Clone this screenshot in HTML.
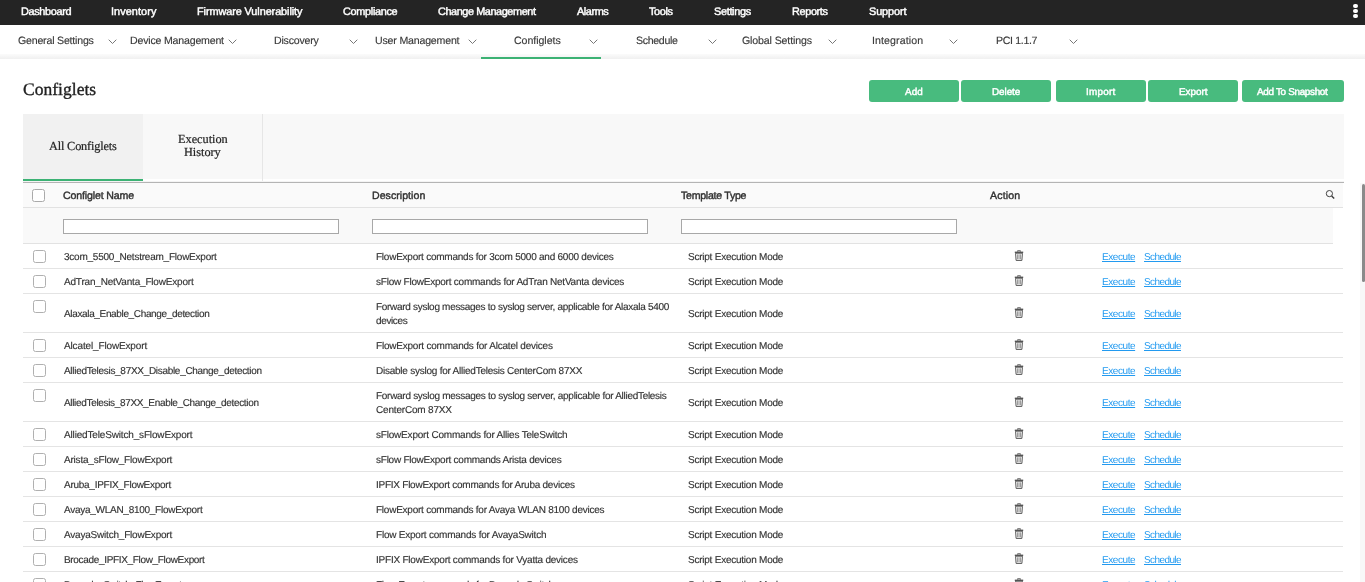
<!DOCTYPE html>
<html><head><meta charset="utf-8"><title>Configlets</title>
<style>
html,body{margin:0;padding:0;}
body{width:1365px;height:582px;overflow:hidden;background:#fff;position:relative;font-family:'Liberation Sans', sans-serif;}
.t{position:absolute;white-space:nowrap;line-height:1;will-change:transform;text-rendering:geometricPrecision;}
</style></head><body>
<div style="position:absolute;left:0;top:0;width:1365px;height:25px;background:#242424"></div>
<div class="t" style="left:20.50px;top:7px;font-size:10.9px;color:#fff;font-weight:normal;font-family:'Liberation Sans', sans-serif;-webkit-text-stroke:0.45px #fff;letter-spacing:-0.340px;">Dashboard</div>
<div class="t" style="left:110.50px;top:7px;font-size:10.9px;color:#fff;font-weight:normal;font-family:'Liberation Sans', sans-serif;-webkit-text-stroke:0.45px #fff;letter-spacing:0.069px;">Inventory</div>
<div class="t" style="left:197.00px;top:7px;font-size:10.9px;color:#fff;font-weight:normal;font-family:'Liberation Sans', sans-serif;-webkit-text-stroke:0.45px #fff;letter-spacing:-0.089px;">Firmware Vulnerability</div>
<div class="t" style="left:342.80px;top:7px;font-size:10.9px;color:#fff;font-weight:normal;font-family:'Liberation Sans', sans-serif;-webkit-text-stroke:0.45px #fff;letter-spacing:-0.317px;">Compliance</div>
<div class="t" style="left:437.70px;top:7px;font-size:10.9px;color:#fff;font-weight:normal;font-family:'Liberation Sans', sans-serif;-webkit-text-stroke:0.45px #fff;letter-spacing:-0.426px;">Change Management</div>
<div class="t" style="left:576.70px;top:7px;font-size:10.9px;color:#fff;font-weight:normal;font-family:'Liberation Sans', sans-serif;-webkit-text-stroke:0.45px #fff;letter-spacing:-0.428px;">Alarms</div>
<div class="t" style="left:649.20px;top:7px;font-size:10.9px;color:#fff;font-weight:normal;font-family:'Liberation Sans', sans-serif;-webkit-text-stroke:0.45px #fff;letter-spacing:-0.394px;">Tools</div>
<div class="t" style="left:713.80px;top:7px;font-size:10.9px;color:#fff;font-weight:normal;font-family:'Liberation Sans', sans-serif;-webkit-text-stroke:0.45px #fff;letter-spacing:-0.315px;">Settings</div>
<div class="t" style="left:792.00px;top:7px;font-size:10.9px;color:#fff;font-weight:normal;font-family:'Liberation Sans', sans-serif;-webkit-text-stroke:0.45px #fff;letter-spacing:-0.365px;">Reports</div>
<div class="t" style="left:868.50px;top:7px;font-size:10.9px;color:#fff;font-weight:normal;font-family:'Liberation Sans', sans-serif;-webkit-text-stroke:0.45px #fff;letter-spacing:-0.103px;">Support</div>
<div style="position:absolute;left:1353.4px;top:4.199999999999999px;width:4.2px;height:4.2px;border-radius:50%;background:#fff"></div>
<div style="position:absolute;left:1353.4px;top:9.200000000000001px;width:4.2px;height:4.2px;border-radius:50%;background:#fff"></div>
<div style="position:absolute;left:1353.4px;top:14.200000000000001px;width:4.2px;height:4.2px;border-radius:50%;background:#fff"></div>
<div style="position:absolute;left:0;top:54px;width:1365px;height:5px;background:linear-gradient(#fbfbfb,#f0f0f0)"></div>
<div class="t" style="left:18.00px;top:36px;font-size:10.6px;color:#3a3a3a;font-weight:normal;font-family:'Liberation Sans', sans-serif;-webkit-text-stroke:0.15px #3a3a3a;letter-spacing:-0.201px;">General Settings</div>
<svg style="position:absolute;left:107.5px;top:38.5px" width="9" height="6" viewBox="0 0 9 6"><path d="M0.7 0.7 L4.5 4.5 L8.3 0.7" fill="none" stroke="#777" stroke-width="1"/></svg>
<div class="t" style="left:129.50px;top:36px;font-size:10.6px;color:#3a3a3a;font-weight:normal;font-family:'Liberation Sans', sans-serif;-webkit-text-stroke:0.15px #3a3a3a;letter-spacing:-0.195px;">Device Management</div>
<svg style="position:absolute;left:228.0px;top:38.5px" width="9" height="6" viewBox="0 0 9 6"><path d="M0.7 0.7 L4.5 4.5 L8.3 0.7" fill="none" stroke="#777" stroke-width="1"/></svg>
<div class="t" style="left:274.40px;top:36px;font-size:10.6px;color:#3a3a3a;font-weight:normal;font-family:'Liberation Sans', sans-serif;-webkit-text-stroke:0.15px #3a3a3a;letter-spacing:-0.201px;">Discovery</div>
<svg style="position:absolute;left:348.5px;top:38.5px" width="9" height="6" viewBox="0 0 9 6"><path d="M0.7 0.7 L4.5 4.5 L8.3 0.7" fill="none" stroke="#777" stroke-width="1"/></svg>
<div class="t" style="left:374.60px;top:36px;font-size:10.6px;color:#3a3a3a;font-weight:normal;font-family:'Liberation Sans', sans-serif;-webkit-text-stroke:0.15px #3a3a3a;letter-spacing:-0.186px;">User Management</div>
<svg style="position:absolute;left:467.5px;top:38.5px" width="9" height="6" viewBox="0 0 9 6"><path d="M0.7 0.7 L4.5 4.5 L8.3 0.7" fill="none" stroke="#777" stroke-width="1"/></svg>
<div class="t" style="left:513.60px;top:36px;font-size:10.6px;color:#3a3a3a;font-weight:normal;font-family:'Liberation Sans', sans-serif;-webkit-text-stroke:0.15px #3a3a3a;letter-spacing:-0.046px;">Configlets</div>
<svg style="position:absolute;left:588.5px;top:38.5px" width="9" height="6" viewBox="0 0 9 6"><path d="M0.7 0.7 L4.5 4.5 L8.3 0.7" fill="none" stroke="#777" stroke-width="1"/></svg>
<div class="t" style="left:636.00px;top:36px;font-size:10.6px;color:#3a3a3a;font-weight:normal;font-family:'Liberation Sans', sans-serif;-webkit-text-stroke:0.15px #3a3a3a;letter-spacing:-0.326px;">Schedule</div>
<svg style="position:absolute;left:708.0px;top:38.5px" width="9" height="6" viewBox="0 0 9 6"><path d="M0.7 0.7 L4.5 4.5 L8.3 0.7" fill="none" stroke="#777" stroke-width="1"/></svg>
<div class="t" style="left:742.00px;top:36px;font-size:10.6px;color:#3a3a3a;font-weight:normal;font-family:'Liberation Sans', sans-serif;-webkit-text-stroke:0.15px #3a3a3a;letter-spacing:-0.132px;">Global Settings</div>
<svg style="position:absolute;left:828.0px;top:38.5px" width="9" height="6" viewBox="0 0 9 6"><path d="M0.7 0.7 L4.5 4.5 L8.3 0.7" fill="none" stroke="#777" stroke-width="1"/></svg>
<div class="t" style="left:871.80px;top:36px;font-size:10.6px;color:#3a3a3a;font-weight:normal;font-family:'Liberation Sans', sans-serif;-webkit-text-stroke:0.15px #3a3a3a;letter-spacing:0.103px;">Integration</div>
<svg style="position:absolute;left:948.5px;top:38.5px" width="9" height="6" viewBox="0 0 9 6"><path d="M0.7 0.7 L4.5 4.5 L8.3 0.7" fill="none" stroke="#777" stroke-width="1"/></svg>
<div class="t" style="left:996.40px;top:36px;font-size:10.6px;color:#3a3a3a;font-weight:normal;font-family:'Liberation Sans', sans-serif;-webkit-text-stroke:0.15px #3a3a3a;letter-spacing:-0.334px;">PCI 1.1.7</div>
<svg style="position:absolute;left:1068.5px;top:38.5px" width="9" height="6" viewBox="0 0 9 6"><path d="M0.7 0.7 L4.5 4.5 L8.3 0.7" fill="none" stroke="#777" stroke-width="1"/></svg>
<div style="position:absolute;left:481px;top:57px;width:120px;height:2px;background:#3cb274"></div>
<div class="t" style="left:23.00px;top:81px;font-size:17.5px;color:#222;font-weight:normal;font-family:'Liberation Serif', serif;-webkit-text-stroke:0.35px #222;letter-spacing:0.022px;">Configlets</div>
<div style="position:absolute;left:869px;top:80px;width:90px;height:22px;background:#48bb7e;border-radius:3px"></div>
<div class="t" style="left:905.40px;top:88px;font-size:9.9px;color:#fff;font-weight:normal;font-family:'Liberation Sans', sans-serif;-webkit-text-stroke:0.45px #fff;letter-spacing:0.111px;">Add</div>
<div style="position:absolute;left:961px;top:80px;width:90px;height:22px;background:#48bb7e;border-radius:3px"></div>
<div class="t" style="left:991.90px;top:88px;font-size:9.9px;color:#fff;font-weight:normal;font-family:'Liberation Sans', sans-serif;-webkit-text-stroke:0.45px #fff;letter-spacing:-0.051px;">Delete</div>
<div style="position:absolute;left:1056px;top:80px;width:90px;height:22px;background:#48bb7e;border-radius:3px"></div>
<div class="t" style="left:1086.00px;top:88px;font-size:9.9px;color:#fff;font-weight:normal;font-family:'Liberation Sans', sans-serif;-webkit-text-stroke:0.45px #fff;letter-spacing:0.252px;">Import</div>
<div style="position:absolute;left:1148px;top:80px;width:90px;height:22px;background:#48bb7e;border-radius:3px"></div>
<div class="t" style="left:1178.80px;top:88px;font-size:9.9px;color:#fff;font-weight:normal;font-family:'Liberation Sans', sans-serif;-webkit-text-stroke:0.45px #fff;letter-spacing:0.001px;">Export</div>
<div style="position:absolute;left:1242px;top:80px;width:102px;height:22px;background:#48bb7e;border-radius:3px"></div>
<div class="t" style="left:1257.40px;top:88px;font-size:9.9px;color:#fff;font-weight:normal;font-family:'Liberation Sans', sans-serif;-webkit-text-stroke:0.45px #fff;letter-spacing:-0.305px;">Add To Snapshot</div>
<div style="position:absolute;left:23px;top:114px;width:1321px;height:65px;background:#f8f8f8"></div>
<div style="position:absolute;left:23px;top:114px;width:120px;height:65px;background:#f1f1f1"></div>
<div style="position:absolute;left:262px;top:114px;width:1px;height:68px;background:#e6e6e6"></div>
<div style="position:absolute;left:23px;top:179px;width:120px;height:2px;background:#3cb274"></div>
<div style="position:absolute;left:23px;top:181px;width:1321px;height:1px;background:#f4f4f4"></div>
<div style="position:absolute;left:23px;top:182px;width:1321px;height:1px;background:#b4b4b4"></div>
<div class="t" style="left:49.00px;top:140px;font-size:12.3px;color:#222;font-weight:normal;font-family:'Liberation Serif', serif;-webkit-text-stroke:0.2px #222;letter-spacing:-0.172px;">All Configlets</div>
<div class="t" style="left:178.00px;top:133px;font-size:12.3px;color:#222;font-weight:normal;font-family:'Liberation Serif', serif;-webkit-text-stroke:0.2px #222;letter-spacing:-0.013px;">Execution</div>
<div class="t" style="left:183.70px;top:146px;font-size:12.3px;color:#222;font-weight:normal;font-family:'Liberation Serif', serif;-webkit-text-stroke:0.2px #222;letter-spacing:-0.024px;">History</div>
<div style="position:absolute;left:23px;top:183px;width:1320px;height:24px;background:#fafafa"></div>
<div style="position:absolute;left:23px;top:207px;width:1320px;height:1px;background:#e2e2e2"></div>
<div style="position:absolute;left:32px;top:189px;width:11px;height:11px;border:1px solid #aaa;border-radius:2.5px;background:#fff"></div>
<div class="t" style="left:63.00px;top:191px;font-size:10.6px;color:#333;font-weight:normal;font-family:'Liberation Sans', sans-serif;-webkit-text-stroke:0.4px #2e2e2e;letter-spacing:-0.140px;">Configlet Name</div>
<div class="t" style="left:372.20px;top:191px;font-size:10.6px;color:#333;font-weight:normal;font-family:'Liberation Sans', sans-serif;-webkit-text-stroke:0.4px #2e2e2e;letter-spacing:0.030px;">Description</div>
<div class="t" style="left:681.40px;top:191px;font-size:10.6px;color:#333;font-weight:normal;font-family:'Liberation Sans', sans-serif;-webkit-text-stroke:0.4px #2e2e2e;letter-spacing:-0.267px;">Template Type</div>
<div class="t" style="left:989.80px;top:191px;font-size:10.6px;color:#333;font-weight:normal;font-family:'Liberation Sans', sans-serif;-webkit-text-stroke:0.4px #2e2e2e;letter-spacing:0.150px;">Action</div>
<svg style="position:absolute;left:1325px;top:189px" width="11" height="11" viewBox="0 0 11 11"><circle cx="4.4" cy="4.6" r="3.1" fill="none" stroke="#3a3a3a" stroke-width="0.95"/><path d="M6.6 6.9 L9.2 9.5" stroke="#3a3a3a" stroke-width="1.4"/></svg>
<div style="position:absolute;left:23px;top:208px;width:1310px;height:35px;background:#f9f9f9"></div>
<div style="position:absolute;left:23px;top:243px;width:1310px;height:1px;background:#e2e2e2"></div>
<div style="position:absolute;left:63px;top:219px;width:274px;height:13px;border:1px solid #a8a8a8;background:#fff"></div>
<div style="position:absolute;left:372px;top:219px;width:274px;height:13px;border:1px solid #a8a8a8;background:#fff"></div>
<div style="position:absolute;left:681px;top:219px;width:274px;height:13px;border:1px solid #a8a8a8;background:#fff"></div>
<div style="position:absolute;left:33px;top:250px;width:11px;height:11px;border:1px solid #b0b0b0;border-radius:2.5px;background:#fff"></div>
<div class="t" style="left:64.00px;top:253px;font-size:10px;color:#333;font-weight:normal;font-family:'Liberation Sans', sans-serif;-webkit-text-stroke:0.15px #333;letter-spacing:-0.229px;">3com_5500_Netstream_FlowExport</div>
<div class="t" style="left:376.00px;top:253px;font-size:10px;color:#333;font-weight:normal;font-family:'Liberation Sans', sans-serif;-webkit-text-stroke:0.15px #333;letter-spacing:-0.240px;">FlowExport commands for 3com 5000 and 6000 devices</div>
<div class="t" style="left:688.40px;top:253px;font-size:10px;color:#333;font-weight:normal;font-family:'Liberation Sans', sans-serif;-webkit-text-stroke:0.15px #333;letter-spacing:-0.234px;">Script Execution Mode</div>
<svg style="position:absolute;left:1013.5px;top:250.0px" width="10" height="11" viewBox="0 0 10 11"><path d="M3.5 1.5 V0.8 H6.5 V1.5" fill="none" stroke="#555" stroke-width="1"/><rect x="0.8" y="1.6" width="8.4" height="1.4" fill="#555"/><path d="M1.6 3.2 H8.4 L7.9 10.4 H2.1 Z" fill="none" stroke="#555" stroke-width="1"/><path d="M3.6 4.3 V9.3 M5 4.3 V9.3 M6.4 4.3 V9.3" stroke="#777" stroke-width="0.8"/></svg>
<div class="t" style="left:1102.00px;top:253px;font-size:10px;color:#229af0;font-weight:normal;font-family:'Liberation Sans', sans-serif;text-decoration:underline;letter-spacing:-0.429px;">Execute</div>
<div class="t" style="left:1144.00px;top:253px;font-size:10px;color:#229af0;font-weight:normal;font-family:'Liberation Sans', sans-serif;text-decoration:underline;letter-spacing:-0.591px;">Schedule</div>
<div style="position:absolute;left:23px;top:268px;width:1320px;height:1px;background:#e4e4e4"></div>
<div style="position:absolute;left:33px;top:275px;width:11px;height:11px;border:1px solid #b0b0b0;border-radius:2.5px;background:#fff"></div>
<div class="t" style="left:64.00px;top:278px;font-size:10px;color:#333;font-weight:normal;font-family:'Liberation Sans', sans-serif;-webkit-text-stroke:0.15px #333;letter-spacing:-0.193px;">AdTran_NetVanta_FlowExport</div>
<div class="t" style="left:376.00px;top:278px;font-size:10px;color:#333;font-weight:normal;font-family:'Liberation Sans', sans-serif;-webkit-text-stroke:0.15px #333;letter-spacing:-0.228px;">sFlow FlowExport commands for AdTran NetVanta devices</div>
<div class="t" style="left:688.40px;top:278px;font-size:10px;color:#333;font-weight:normal;font-family:'Liberation Sans', sans-serif;-webkit-text-stroke:0.15px #333;letter-spacing:-0.234px;">Script Execution Mode</div>
<svg style="position:absolute;left:1013.5px;top:275.0px" width="10" height="11" viewBox="0 0 10 11"><path d="M3.5 1.5 V0.8 H6.5 V1.5" fill="none" stroke="#555" stroke-width="1"/><rect x="0.8" y="1.6" width="8.4" height="1.4" fill="#555"/><path d="M1.6 3.2 H8.4 L7.9 10.4 H2.1 Z" fill="none" stroke="#555" stroke-width="1"/><path d="M3.6 4.3 V9.3 M5 4.3 V9.3 M6.4 4.3 V9.3" stroke="#777" stroke-width="0.8"/></svg>
<div class="t" style="left:1102.00px;top:278px;font-size:10px;color:#229af0;font-weight:normal;font-family:'Liberation Sans', sans-serif;text-decoration:underline;letter-spacing:-0.429px;">Execute</div>
<div class="t" style="left:1144.00px;top:278px;font-size:10px;color:#229af0;font-weight:normal;font-family:'Liberation Sans', sans-serif;text-decoration:underline;letter-spacing:-0.591px;">Schedule</div>
<div style="position:absolute;left:23px;top:293px;width:1320px;height:1px;background:#e4e4e4"></div>
<div style="position:absolute;left:33px;top:300px;width:11px;height:11px;border:1px solid #b0b0b0;border-radius:2.5px;background:#fff"></div>
<div class="t" style="left:64.00px;top:310px;font-size:10px;color:#333;font-weight:normal;font-family:'Liberation Sans', sans-serif;-webkit-text-stroke:0.15px #333;letter-spacing:-0.349px;">Alaxala_Enable_Change_detection</div>
<div class="t" style="left:376.00px;top:303px;font-size:10px;color:#333;font-weight:normal;font-family:'Liberation Sans', sans-serif;-webkit-text-stroke:0.15px #333;letter-spacing:-0.297px;">Forward syslog messages to syslog server, applicable for Alaxala 5400</div>
<div class="t" style="left:376.00px;top:317px;font-size:10px;color:#333;font-weight:normal;font-family:'Liberation Sans', sans-serif;-webkit-text-stroke:0.15px #333;letter-spacing:-0.368px;">devices</div>
<div class="t" style="left:688.40px;top:310px;font-size:10px;color:#333;font-weight:normal;font-family:'Liberation Sans', sans-serif;-webkit-text-stroke:0.15px #333;letter-spacing:-0.234px;">Script Execution Mode</div>
<svg style="position:absolute;left:1013.5px;top:307.0px" width="10" height="11" viewBox="0 0 10 11"><path d="M3.5 1.5 V0.8 H6.5 V1.5" fill="none" stroke="#555" stroke-width="1"/><rect x="0.8" y="1.6" width="8.4" height="1.4" fill="#555"/><path d="M1.6 3.2 H8.4 L7.9 10.4 H2.1 Z" fill="none" stroke="#555" stroke-width="1"/><path d="M3.6 4.3 V9.3 M5 4.3 V9.3 M6.4 4.3 V9.3" stroke="#777" stroke-width="0.8"/></svg>
<div class="t" style="left:1102.00px;top:310px;font-size:10px;color:#229af0;font-weight:normal;font-family:'Liberation Sans', sans-serif;text-decoration:underline;letter-spacing:-0.429px;">Execute</div>
<div class="t" style="left:1144.00px;top:310px;font-size:10px;color:#229af0;font-weight:normal;font-family:'Liberation Sans', sans-serif;text-decoration:underline;letter-spacing:-0.591px;">Schedule</div>
<div style="position:absolute;left:23px;top:332px;width:1320px;height:1px;background:#e4e4e4"></div>
<div style="position:absolute;left:33px;top:339px;width:11px;height:11px;border:1px solid #b0b0b0;border-radius:2.5px;background:#fff"></div>
<div class="t" style="left:64.00px;top:342px;font-size:10px;color:#333;font-weight:normal;font-family:'Liberation Sans', sans-serif;-webkit-text-stroke:0.15px #333;letter-spacing:-0.142px;">Alcatel_FlowExport</div>
<div class="t" style="left:376.00px;top:342px;font-size:10px;color:#333;font-weight:normal;font-family:'Liberation Sans', sans-serif;-webkit-text-stroke:0.15px #333;letter-spacing:-0.214px;">FlowExport commands for Alcatel devices</div>
<div class="t" style="left:688.40px;top:342px;font-size:10px;color:#333;font-weight:normal;font-family:'Liberation Sans', sans-serif;-webkit-text-stroke:0.15px #333;letter-spacing:-0.234px;">Script Execution Mode</div>
<svg style="position:absolute;left:1013.5px;top:339.0px" width="10" height="11" viewBox="0 0 10 11"><path d="M3.5 1.5 V0.8 H6.5 V1.5" fill="none" stroke="#555" stroke-width="1"/><rect x="0.8" y="1.6" width="8.4" height="1.4" fill="#555"/><path d="M1.6 3.2 H8.4 L7.9 10.4 H2.1 Z" fill="none" stroke="#555" stroke-width="1"/><path d="M3.6 4.3 V9.3 M5 4.3 V9.3 M6.4 4.3 V9.3" stroke="#777" stroke-width="0.8"/></svg>
<div class="t" style="left:1102.00px;top:342px;font-size:10px;color:#229af0;font-weight:normal;font-family:'Liberation Sans', sans-serif;text-decoration:underline;letter-spacing:-0.429px;">Execute</div>
<div class="t" style="left:1144.00px;top:342px;font-size:10px;color:#229af0;font-weight:normal;font-family:'Liberation Sans', sans-serif;text-decoration:underline;letter-spacing:-0.591px;">Schedule</div>
<div style="position:absolute;left:23px;top:357px;width:1320px;height:1px;background:#e4e4e4"></div>
<div style="position:absolute;left:33px;top:364px;width:11px;height:11px;border:1px solid #b0b0b0;border-radius:2.5px;background:#fff"></div>
<div class="t" style="left:64.00px;top:367px;font-size:10px;color:#333;font-weight:normal;font-family:'Liberation Sans', sans-serif;-webkit-text-stroke:0.15px #333;letter-spacing:-0.301px;">AlliedTelesis_87XX_Disable_Change_detection</div>
<div class="t" style="left:376.00px;top:367px;font-size:10px;color:#333;font-weight:normal;font-family:'Liberation Sans', sans-serif;-webkit-text-stroke:0.15px #333;letter-spacing:-0.239px;">Disable syslog for AlliedTelesis CenterCom 87XX</div>
<div class="t" style="left:688.40px;top:367px;font-size:10px;color:#333;font-weight:normal;font-family:'Liberation Sans', sans-serif;-webkit-text-stroke:0.15px #333;letter-spacing:-0.234px;">Script Execution Mode</div>
<svg style="position:absolute;left:1013.5px;top:364.0px" width="10" height="11" viewBox="0 0 10 11"><path d="M3.5 1.5 V0.8 H6.5 V1.5" fill="none" stroke="#555" stroke-width="1"/><rect x="0.8" y="1.6" width="8.4" height="1.4" fill="#555"/><path d="M1.6 3.2 H8.4 L7.9 10.4 H2.1 Z" fill="none" stroke="#555" stroke-width="1"/><path d="M3.6 4.3 V9.3 M5 4.3 V9.3 M6.4 4.3 V9.3" stroke="#777" stroke-width="0.8"/></svg>
<div class="t" style="left:1102.00px;top:367px;font-size:10px;color:#229af0;font-weight:normal;font-family:'Liberation Sans', sans-serif;text-decoration:underline;letter-spacing:-0.429px;">Execute</div>
<div class="t" style="left:1144.00px;top:367px;font-size:10px;color:#229af0;font-weight:normal;font-family:'Liberation Sans', sans-serif;text-decoration:underline;letter-spacing:-0.591px;">Schedule</div>
<div style="position:absolute;left:23px;top:382px;width:1320px;height:1px;background:#e4e4e4"></div>
<div style="position:absolute;left:33px;top:389px;width:11px;height:11px;border:1px solid #b0b0b0;border-radius:2.5px;background:#fff"></div>
<div class="t" style="left:64.00px;top:399px;font-size:10px;color:#333;font-weight:normal;font-family:'Liberation Sans', sans-serif;-webkit-text-stroke:0.15px #333;letter-spacing:-0.330px;">AlliedTelesis_87XX_Enable_Change_detection</div>
<div class="t" style="left:376.00px;top:392px;font-size:10px;color:#333;font-weight:normal;font-family:'Liberation Sans', sans-serif;-webkit-text-stroke:0.15px #333;letter-spacing:-0.289px;">Forward syslog messages to syslog server, applicable for AlliedTelesis</div>
<div class="t" style="left:376.00px;top:406px;font-size:10px;color:#333;font-weight:normal;font-family:'Liberation Sans', sans-serif;-webkit-text-stroke:0.15px #333;letter-spacing:-0.185px;">CenterCom 87XX</div>
<div class="t" style="left:688.40px;top:399px;font-size:10px;color:#333;font-weight:normal;font-family:'Liberation Sans', sans-serif;-webkit-text-stroke:0.15px #333;letter-spacing:-0.234px;">Script Execution Mode</div>
<svg style="position:absolute;left:1013.5px;top:396.0px" width="10" height="11" viewBox="0 0 10 11"><path d="M3.5 1.5 V0.8 H6.5 V1.5" fill="none" stroke="#555" stroke-width="1"/><rect x="0.8" y="1.6" width="8.4" height="1.4" fill="#555"/><path d="M1.6 3.2 H8.4 L7.9 10.4 H2.1 Z" fill="none" stroke="#555" stroke-width="1"/><path d="M3.6 4.3 V9.3 M5 4.3 V9.3 M6.4 4.3 V9.3" stroke="#777" stroke-width="0.8"/></svg>
<div class="t" style="left:1102.00px;top:399px;font-size:10px;color:#229af0;font-weight:normal;font-family:'Liberation Sans', sans-serif;text-decoration:underline;letter-spacing:-0.429px;">Execute</div>
<div class="t" style="left:1144.00px;top:399px;font-size:10px;color:#229af0;font-weight:normal;font-family:'Liberation Sans', sans-serif;text-decoration:underline;letter-spacing:-0.591px;">Schedule</div>
<div style="position:absolute;left:23px;top:421px;width:1320px;height:1px;background:#e4e4e4"></div>
<div style="position:absolute;left:33px;top:428px;width:11px;height:11px;border:1px solid #b0b0b0;border-radius:2.5px;background:#fff"></div>
<div class="t" style="left:64.00px;top:431px;font-size:10px;color:#333;font-weight:normal;font-family:'Liberation Sans', sans-serif;-webkit-text-stroke:0.15px #333;letter-spacing:-0.161px;">AlliedTeleSwitch_sFlowExport</div>
<div class="t" style="left:376.00px;top:431px;font-size:10px;color:#333;font-weight:normal;font-family:'Liberation Sans', sans-serif;-webkit-text-stroke:0.15px #333;letter-spacing:-0.201px;">sFlowExport Commands for Allies TeleSwitch</div>
<div class="t" style="left:688.40px;top:431px;font-size:10px;color:#333;font-weight:normal;font-family:'Liberation Sans', sans-serif;-webkit-text-stroke:0.15px #333;letter-spacing:-0.234px;">Script Execution Mode</div>
<svg style="position:absolute;left:1013.5px;top:428.0px" width="10" height="11" viewBox="0 0 10 11"><path d="M3.5 1.5 V0.8 H6.5 V1.5" fill="none" stroke="#555" stroke-width="1"/><rect x="0.8" y="1.6" width="8.4" height="1.4" fill="#555"/><path d="M1.6 3.2 H8.4 L7.9 10.4 H2.1 Z" fill="none" stroke="#555" stroke-width="1"/><path d="M3.6 4.3 V9.3 M5 4.3 V9.3 M6.4 4.3 V9.3" stroke="#777" stroke-width="0.8"/></svg>
<div class="t" style="left:1102.00px;top:431px;font-size:10px;color:#229af0;font-weight:normal;font-family:'Liberation Sans', sans-serif;text-decoration:underline;letter-spacing:-0.429px;">Execute</div>
<div class="t" style="left:1144.00px;top:431px;font-size:10px;color:#229af0;font-weight:normal;font-family:'Liberation Sans', sans-serif;text-decoration:underline;letter-spacing:-0.591px;">Schedule</div>
<div style="position:absolute;left:23px;top:446px;width:1320px;height:1px;background:#e4e4e4"></div>
<div style="position:absolute;left:33px;top:453px;width:11px;height:11px;border:1px solid #b0b0b0;border-radius:2.5px;background:#fff"></div>
<div class="t" style="left:64.00px;top:456px;font-size:10px;color:#333;font-weight:normal;font-family:'Liberation Sans', sans-serif;-webkit-text-stroke:0.15px #333;letter-spacing:-0.206px;">Arista_sFlow_FlowExport</div>
<div class="t" style="left:376.00px;top:456px;font-size:10px;color:#333;font-weight:normal;font-family:'Liberation Sans', sans-serif;-webkit-text-stroke:0.15px #333;letter-spacing:-0.241px;">sFlow FlowExport commands Arista devices</div>
<div class="t" style="left:688.40px;top:456px;font-size:10px;color:#333;font-weight:normal;font-family:'Liberation Sans', sans-serif;-webkit-text-stroke:0.15px #333;letter-spacing:-0.234px;">Script Execution Mode</div>
<svg style="position:absolute;left:1013.5px;top:453.0px" width="10" height="11" viewBox="0 0 10 11"><path d="M3.5 1.5 V0.8 H6.5 V1.5" fill="none" stroke="#555" stroke-width="1"/><rect x="0.8" y="1.6" width="8.4" height="1.4" fill="#555"/><path d="M1.6 3.2 H8.4 L7.9 10.4 H2.1 Z" fill="none" stroke="#555" stroke-width="1"/><path d="M3.6 4.3 V9.3 M5 4.3 V9.3 M6.4 4.3 V9.3" stroke="#777" stroke-width="0.8"/></svg>
<div class="t" style="left:1102.00px;top:456px;font-size:10px;color:#229af0;font-weight:normal;font-family:'Liberation Sans', sans-serif;text-decoration:underline;letter-spacing:-0.429px;">Execute</div>
<div class="t" style="left:1144.00px;top:456px;font-size:10px;color:#229af0;font-weight:normal;font-family:'Liberation Sans', sans-serif;text-decoration:underline;letter-spacing:-0.591px;">Schedule</div>
<div style="position:absolute;left:23px;top:471px;width:1320px;height:1px;background:#e4e4e4"></div>
<div style="position:absolute;left:33px;top:478px;width:11px;height:11px;border:1px solid #b0b0b0;border-radius:2.5px;background:#fff"></div>
<div class="t" style="left:64.00px;top:481px;font-size:10px;color:#333;font-weight:normal;font-family:'Liberation Sans', sans-serif;-webkit-text-stroke:0.15px #333;letter-spacing:-0.269px;">Aruba_IPFIX_FlowExport</div>
<div class="t" style="left:376.00px;top:481px;font-size:10px;color:#333;font-weight:normal;font-family:'Liberation Sans', sans-serif;-webkit-text-stroke:0.15px #333;letter-spacing:-0.252px;">IPFIX FlowExport commands for Aruba devices</div>
<div class="t" style="left:688.40px;top:481px;font-size:10px;color:#333;font-weight:normal;font-family:'Liberation Sans', sans-serif;-webkit-text-stroke:0.15px #333;letter-spacing:-0.234px;">Script Execution Mode</div>
<svg style="position:absolute;left:1013.5px;top:478.0px" width="10" height="11" viewBox="0 0 10 11"><path d="M3.5 1.5 V0.8 H6.5 V1.5" fill="none" stroke="#555" stroke-width="1"/><rect x="0.8" y="1.6" width="8.4" height="1.4" fill="#555"/><path d="M1.6 3.2 H8.4 L7.9 10.4 H2.1 Z" fill="none" stroke="#555" stroke-width="1"/><path d="M3.6 4.3 V9.3 M5 4.3 V9.3 M6.4 4.3 V9.3" stroke="#777" stroke-width="0.8"/></svg>
<div class="t" style="left:1102.00px;top:481px;font-size:10px;color:#229af0;font-weight:normal;font-family:'Liberation Sans', sans-serif;text-decoration:underline;letter-spacing:-0.429px;">Execute</div>
<div class="t" style="left:1144.00px;top:481px;font-size:10px;color:#229af0;font-weight:normal;font-family:'Liberation Sans', sans-serif;text-decoration:underline;letter-spacing:-0.591px;">Schedule</div>
<div style="position:absolute;left:23px;top:496px;width:1320px;height:1px;background:#e4e4e4"></div>
<div style="position:absolute;left:33px;top:503px;width:11px;height:11px;border:1px solid #b0b0b0;border-radius:2.5px;background:#fff"></div>
<div class="t" style="left:64.00px;top:506px;font-size:10px;color:#333;font-weight:normal;font-family:'Liberation Sans', sans-serif;-webkit-text-stroke:0.15px #333;letter-spacing:-0.271px;">Avaya_WLAN_8100_FlowExport</div>
<div class="t" style="left:376.00px;top:506px;font-size:10px;color:#333;font-weight:normal;font-family:'Liberation Sans', sans-serif;-webkit-text-stroke:0.15px #333;letter-spacing:-0.235px;">FlowExport commands for Avaya WLAN 8100 devices</div>
<div class="t" style="left:688.40px;top:506px;font-size:10px;color:#333;font-weight:normal;font-family:'Liberation Sans', sans-serif;-webkit-text-stroke:0.15px #333;letter-spacing:-0.234px;">Script Execution Mode</div>
<svg style="position:absolute;left:1013.5px;top:503.0px" width="10" height="11" viewBox="0 0 10 11"><path d="M3.5 1.5 V0.8 H6.5 V1.5" fill="none" stroke="#555" stroke-width="1"/><rect x="0.8" y="1.6" width="8.4" height="1.4" fill="#555"/><path d="M1.6 3.2 H8.4 L7.9 10.4 H2.1 Z" fill="none" stroke="#555" stroke-width="1"/><path d="M3.6 4.3 V9.3 M5 4.3 V9.3 M6.4 4.3 V9.3" stroke="#777" stroke-width="0.8"/></svg>
<div class="t" style="left:1102.00px;top:506px;font-size:10px;color:#229af0;font-weight:normal;font-family:'Liberation Sans', sans-serif;text-decoration:underline;letter-spacing:-0.429px;">Execute</div>
<div class="t" style="left:1144.00px;top:506px;font-size:10px;color:#229af0;font-weight:normal;font-family:'Liberation Sans', sans-serif;text-decoration:underline;letter-spacing:-0.591px;">Schedule</div>
<div style="position:absolute;left:23px;top:521px;width:1320px;height:1px;background:#e4e4e4"></div>
<div style="position:absolute;left:33px;top:528px;width:11px;height:11px;border:1px solid #b0b0b0;border-radius:2.5px;background:#fff"></div>
<div class="t" style="left:64.00px;top:531px;font-size:10px;color:#333;font-weight:normal;font-family:'Liberation Sans', sans-serif;-webkit-text-stroke:0.15px #333;letter-spacing:-0.208px;">AvayaSwitch_FlowExport</div>
<div class="t" style="left:376.00px;top:531px;font-size:10px;color:#333;font-weight:normal;font-family:'Liberation Sans', sans-serif;-webkit-text-stroke:0.15px #333;letter-spacing:-0.220px;">Flow Export commands for AvayaSwitch</div>
<div class="t" style="left:688.40px;top:531px;font-size:10px;color:#333;font-weight:normal;font-family:'Liberation Sans', sans-serif;-webkit-text-stroke:0.15px #333;letter-spacing:-0.234px;">Script Execution Mode</div>
<svg style="position:absolute;left:1013.5px;top:528.0px" width="10" height="11" viewBox="0 0 10 11"><path d="M3.5 1.5 V0.8 H6.5 V1.5" fill="none" stroke="#555" stroke-width="1"/><rect x="0.8" y="1.6" width="8.4" height="1.4" fill="#555"/><path d="M1.6 3.2 H8.4 L7.9 10.4 H2.1 Z" fill="none" stroke="#555" stroke-width="1"/><path d="M3.6 4.3 V9.3 M5 4.3 V9.3 M6.4 4.3 V9.3" stroke="#777" stroke-width="0.8"/></svg>
<div class="t" style="left:1102.00px;top:531px;font-size:10px;color:#229af0;font-weight:normal;font-family:'Liberation Sans', sans-serif;text-decoration:underline;letter-spacing:-0.429px;">Execute</div>
<div class="t" style="left:1144.00px;top:531px;font-size:10px;color:#229af0;font-weight:normal;font-family:'Liberation Sans', sans-serif;text-decoration:underline;letter-spacing:-0.591px;">Schedule</div>
<div style="position:absolute;left:23px;top:546px;width:1320px;height:1px;background:#e4e4e4"></div>
<div style="position:absolute;left:33px;top:553px;width:11px;height:11px;border:1px solid #b0b0b0;border-radius:2.5px;background:#fff"></div>
<div class="t" style="left:64.00px;top:556px;font-size:10px;color:#333;font-weight:normal;font-family:'Liberation Sans', sans-serif;-webkit-text-stroke:0.15px #333;letter-spacing:-0.328px;">Brocade_IPFIX_Flow_FlowExport</div>
<div class="t" style="left:376.00px;top:556px;font-size:10px;color:#333;font-weight:normal;font-family:'Liberation Sans', sans-serif;-webkit-text-stroke:0.15px #333;letter-spacing:-0.218px;">IPFIX FlowExport commands for Vyatta devices</div>
<div class="t" style="left:688.40px;top:556px;font-size:10px;color:#333;font-weight:normal;font-family:'Liberation Sans', sans-serif;-webkit-text-stroke:0.15px #333;letter-spacing:-0.234px;">Script Execution Mode</div>
<svg style="position:absolute;left:1013.5px;top:553.0px" width="10" height="11" viewBox="0 0 10 11"><path d="M3.5 1.5 V0.8 H6.5 V1.5" fill="none" stroke="#555" stroke-width="1"/><rect x="0.8" y="1.6" width="8.4" height="1.4" fill="#555"/><path d="M1.6 3.2 H8.4 L7.9 10.4 H2.1 Z" fill="none" stroke="#555" stroke-width="1"/><path d="M3.6 4.3 V9.3 M5 4.3 V9.3 M6.4 4.3 V9.3" stroke="#777" stroke-width="0.8"/></svg>
<div class="t" style="left:1102.00px;top:556px;font-size:10px;color:#229af0;font-weight:normal;font-family:'Liberation Sans', sans-serif;text-decoration:underline;letter-spacing:-0.429px;">Execute</div>
<div class="t" style="left:1144.00px;top:556px;font-size:10px;color:#229af0;font-weight:normal;font-family:'Liberation Sans', sans-serif;text-decoration:underline;letter-spacing:-0.591px;">Schedule</div>
<div style="position:absolute;left:23px;top:571px;width:1320px;height:1px;background:#e4e4e4"></div>
<div style="position:absolute;left:33px;top:578px;width:11px;height:11px;border:1px solid #b0b0b0;border-radius:2.5px;background:#fff"></div>
<div class="t" style="left:64.00px;top:581px;font-size:10px;color:#333;font-weight:normal;font-family:'Liberation Sans', sans-serif;-webkit-text-stroke:0.15px #333;letter-spacing:-0.419px;">Brocade_Switch_FlowExport</div>
<div class="t" style="left:376.00px;top:581px;font-size:10px;color:#333;font-weight:normal;font-family:'Liberation Sans', sans-serif;-webkit-text-stroke:0.15px #333;letter-spacing:-0.345px;">Flow Export commands for Brocade Switch</div>
<div class="t" style="left:688.40px;top:581px;font-size:10px;color:#333;font-weight:normal;font-family:'Liberation Sans', sans-serif;-webkit-text-stroke:0.15px #333;letter-spacing:-0.234px;">Script Execution Mode</div>
<svg style="position:absolute;left:1013.5px;top:578.0px" width="10" height="11" viewBox="0 0 10 11"><path d="M3.5 1.5 V0.8 H6.5 V1.5" fill="none" stroke="#555" stroke-width="1"/><rect x="0.8" y="1.6" width="8.4" height="1.4" fill="#555"/><path d="M1.6 3.2 H8.4 L7.9 10.4 H2.1 Z" fill="none" stroke="#555" stroke-width="1"/><path d="M3.6 4.3 V9.3 M5 4.3 V9.3 M6.4 4.3 V9.3" stroke="#777" stroke-width="0.8"/></svg>
<div class="t" style="left:1102.00px;top:581px;font-size:10px;color:#229af0;font-weight:normal;font-family:'Liberation Sans', sans-serif;text-decoration:underline;letter-spacing:-0.429px;">Execute</div>
<div class="t" style="left:1144.00px;top:581px;font-size:10px;color:#229af0;font-weight:normal;font-family:'Liberation Sans', sans-serif;text-decoration:underline;letter-spacing:-0.591px;">Schedule</div>
<div style="position:absolute;left:23px;top:596px;width:1320px;height:1px;background:#e4e4e4"></div>
<div style="position:absolute;left:1360px;top:183px;width:5px;height:399px;background:#f8f8f8"></div>
<div style="position:absolute;left:1362px;top:184px;width:3px;height:98px;background:#8a8a8a;border-radius:1.5px"></div>
</body></html>
